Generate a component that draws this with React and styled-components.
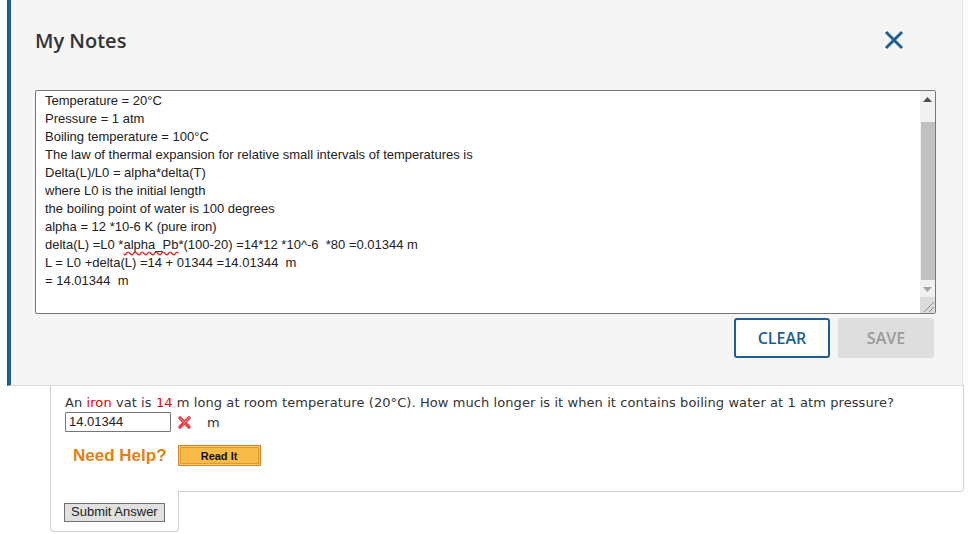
import styled, { createGlobalStyle } from "styled-components";

const GlobalStyle = createGlobalStyle`
    html, body {
        margin: 0;
        padding: 0;
        background: #fff;
    }
    body {
        font-family: "Liberation Sans", Arial, sans-serif;
    }
`

const Page = styled.div`
    width: 970px;
    height: 534px;
    overflow: hidden;
`

const Modal = styled.div`
    margin-left: 7px;
    width: 956px;
    height: 386px;
    box-sizing: border-box;
    background: #f5f5f5;
    border-left: 4px solid #1c5f95;
    border-right: 1px solid #e2e2e2;
    border-bottom: 1px solid #dcdcdc;
    padding: 0 26px 0 24px;
    display: flex;
    flex-direction: column;
    position: relative;
    z-index: 2;
`

const Header = styled.div`
    display: flex;
    align-items: center;
    justify-content: space-between;
    height: 80px;
`

const Title = styled.h2`
    margin: 0;
    font-family: "Open Sans", sans-serif;
    font-weight: 600;
    font-size: 20px;
    color: #333;
`

const CloseButton = styled.button`
    border: none;
    background: none;
    padding: 0;
    margin-right: 32px;
    width: 20px;
    height: 20px;
    cursor: pointer;
    display: flex;
`

const NotesBox = styled.div`
    margin-top: 10px;
    height: 224px;
    box-sizing: border-box;
    background: #fff;
    border: 1px solid #767676;
    border-radius: 2px;
    display: flex;
    overflow: hidden;
`

const NotesText = styled.div`
    flex: 1;
    padding: 1px 9px;
    font-family: "Liberation Sans", Arial, sans-serif;
    font-size: 13px;
    line-height: 18px;
    color: #222;
    white-space: pre-wrap;
    overflow: hidden;
`

const ScrollBar = styled.div`
    width: 15px;
    display: flex;
    flex-direction: column;
    background: #f1f1f1;
`

const ScrollArrow = styled.div`
    height: 16px;
    display: flex;
    align-items: center;
    justify-content: center;
`

const ScrollTrack = styled.div`
    flex: 1;
    display: flex;
    flex-direction: column;
    padding: 15px 0 1px 1px;
`

const ScrollThumb = styled.div`
    flex: 1;
    background: #c1c1c1;
`

const ResizeCorner = styled.div`
    height: 16px;
    background: #dcdcdc;
    display: flex;
    align-items: flex-end;
    justify-content: flex-end;
`

const Misspelled = styled.span`
    text-decoration: underline wavy #e02020;
    text-decoration-skip-ink: none;
    text-underline-offset: 2px;
`

const ButtonRow = styled.div`
    display: flex;
    justify-content: flex-end;
    gap: 8px;
    padding-right: 2px;
    margin-top: 4px;
`

const ActionButton = styled.button`
    width: 96px;
    height: 40px;
    box-sizing: border-box;
    border-radius: 3px;
    font-family: "Open Sans", sans-serif;
    font-weight: 600;
    font-size: 16px;
    cursor: pointer;
    border: ${p => p.$primary ? "2px solid #1c5f95" : "none"};
    background: ${p => p.$primary ? "#fff" : "#dedede"};
    color: ${p => p.$primary ? "#1c5f95" : "#9a9a9a"};
`

const Question = styled.div`
    margin-left: 50px;
    width: 914px;
    box-sizing: border-box;
    margin-top: -1px;
    border: 1px solid #d0d0d0;
    border-top: none;
    border-bottom-right-radius: 4px;
    padding: 10px 14px 25px 14px;
    position: relative;
    z-index: 1;
`

const Prompt = styled.div`
    font-family: "DejaVu Sans", Verdana, sans-serif;
    font-size: 13px;
    line-height: 16px;
    letter-spacing: 0.08px;
    color: #333;
`

const Red = styled.span`
    color: #ee0000;
`

const AnswerRow = styled.div`
    display: flex;
    align-items: center;
    margin-top: 1px;
    gap: 6px;
`

const AnswerInput = styled.div`
    width: 106px;
    height: 20px;
    box-sizing: border-box;
    border: 1px solid #767676;
    border-radius: 1px;
    padding: 0 3px;
    font-family: "Liberation Sans", Arial, sans-serif;
    font-size: 13px;
    line-height: 18px;
    color: #222;
    background: #fff;
`

const Unit = styled.span`
    font-family: "DejaVu Sans", Verdana, sans-serif;
    font-size: 13px;
    color: #333;
    margin-left: 9px;
`

const HelpRow = styled.div`
    display: flex;
    align-items: center;
    gap: 11px;
    margin-top: 13px;
    padding-left: 8px;
`

const HelpLabel = styled.span`
    font-family: "Liberation Sans", Arial, sans-serif;
    font-weight: bold;
    font-size: 17px;
    color: #e5800f;
`

const ReadIt = styled.button`
    width: 83px;
    height: 21px;
    box-sizing: border-box;
    border: 1px solid #d9862a;
    box-shadow: inset 0 0 0 1px #f6c96a, inset 0 0 0 2px #e09a35;
    background: #f8bb48;
    font-family: "Liberation Sans", Arial, sans-serif;
    font-weight: bold;
    font-size: 11px;
    color: #111;
    padding: 0;
    cursor: pointer;
`

const SubmitCell = styled.div`
    margin-left: 50px;
    margin-top: -1px;
    width: 129px;
    box-sizing: border-box;
    border: 1px solid #d0d0d0;
    border-top: none;
    border-radius: 0 0 4px 4px;
    background: #fff;
    padding: 11px 13px 9px 13px;
    position: relative;
    z-index: 2;
`

const SubmitButton = styled.button`
    height: 19px;
    box-sizing: border-box;
    padding: 0 6px;
    border: 1px solid #707070;
    background: #e1e1e1;
    font-family: "Liberation Sans", Arial, sans-serif;
    font-size: 13px;
    color: #222;
    line-height: 16px;
    cursor: pointer;
`

function WrongMark() {
    return (
        <svg width="15" height="15" viewBox="0 0 15 15">
            <path d="M3 3 L12 12 M12 3 L3 12" stroke="#e8464a" strokeWidth="3.6" strokeLinecap="round" />
            <path d="M3.5 3.5 L7.5 7.5 M11.5 3.5 L7.5 7.5" stroke="#f38a8c" strokeWidth="1" strokeLinecap="round" />
        </svg>
    )
}

export default function App() {
    return (
        <Page>
            <GlobalStyle />
            <Modal>
                <Header>
                    <Title>My Notes</Title>
                    <CloseButton aria-label="Close">
                        <svg width="20" height="20" viewBox="0 0 20 20">
                            <path d="M2 2 L18 18 M18 2 L2 18" stroke="#1c5f95" strokeWidth="3" />
                        </svg>
                    </CloseButton>
                </Header>
                <NotesBox>
                    <NotesText>
{`Temperature = 20°C
Pressure = 1 atm
Boiling temperature = 100°C
The law of thermal expansion for relative small intervals of temperatures is
Delta(L)/L0 = alpha*delta(T)
where L0 is the initial length
the boiling point of water is 100 degrees
alpha = 12 *10-6 K (pure iron)
delta(L) =L0 *`}<Misspelled>alpha_Pb</Misspelled>{`*(100-20) =14*12 *10^-6  *80 =0.01344 m
L = L0 +delta(L) =14 + 01344 =14.01344  m
= 14.01344  m`}
                    </NotesText>
                    <ScrollBar>
                        <ScrollArrow>
                            <svg width="9" height="5" viewBox="0 0 9 5"><path d="M0 5 L4.5 0 L9 5 Z" fill="#505050" /></svg>
                        </ScrollArrow>
                        <ScrollTrack>
                            <ScrollThumb />
                        </ScrollTrack>
                        <ScrollArrow>
                            <svg width="9" height="5" viewBox="0 0 9 5"><path d="M0 0 L4.5 5 L9 0 Z" fill="#a3a3a3" /></svg>
                        </ScrollArrow>
                        <ResizeCorner>
                            <svg width="14" height="14" viewBox="0 0 14 14">
                                <path d="M3 13 L13 3 M8 13 L13 8" stroke="#8a8a8a" strokeWidth="1" />
                            </svg>
                        </ResizeCorner>
                    </ScrollBar>
                </NotesBox>
                <ButtonRow>
                    <ActionButton $primary>CLEAR</ActionButton>
                    <ActionButton>SAVE</ActionButton>
                </ButtonRow>
            </Modal>
            <Question>
                <Prompt>
                    An <Red>iron</Red> vat is <Red>14</Red> m long at room temperature (20°C). How much longer is it when it contains boiling water at 1 atm pressure?
                </Prompt>
                <AnswerRow>
                    <AnswerInput>14.01344</AnswerInput>
                    <WrongMark />
                    <Unit>m</Unit>
                </AnswerRow>
                <HelpRow>
                    <HelpLabel>Need Help?</HelpLabel>
                    <ReadIt>Read It</ReadIt>
                </HelpRow>
            </Question>
            <SubmitCell>
                <SubmitButton>Submit Answer</SubmitButton>
            </SubmitCell>
        </Page>
    )
}
